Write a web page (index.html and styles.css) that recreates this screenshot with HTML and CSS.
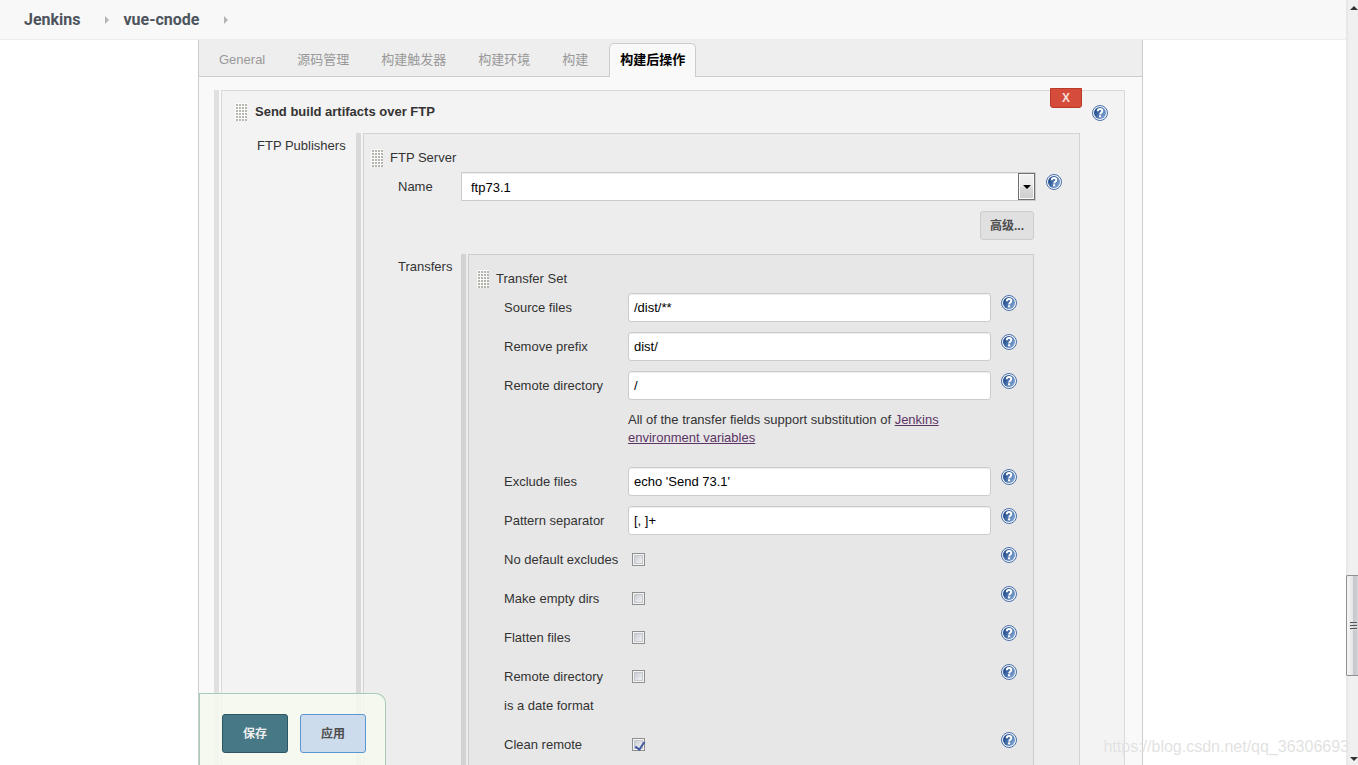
FILE: index.html
```html
<!DOCTYPE html>
<html lang="zh-CN">
<head>
<meta charset="utf-8">
<title>vue-cnode Config [Jenkins]</title>
<link rel="stylesheet" href="styles.css">
</head>
<body>
<svg class="defs" aria-hidden="true">
  <defs>
    <linearGradient id="ball" x1="0" y1="0.2" x2="1" y2="0.8">
      <stop offset="0.1" stop-color="#1f4a8a"/>
      <stop offset="1" stop-color="#86abd9"/>
    </linearGradient>
    <symbol id="help" viewBox="0 0 16 16">
      <circle cx="8" cy="8" r="7.5" fill="#f4f7fb" stroke="#4a70ab" stroke-width="1"/>
      <circle cx="8" cy="8" r="6" fill="url(#ball)"/>
      <path d="M5.700 6.200C5.800 4.600 6.800 4 8.100 4c1.400 0 2.200.8 2.200 1.900C10.300 7.400 8.200 7.500 8.200 9.400" fill="none" stroke="#fff" stroke-width="1.900"/>
      <rect x="7" y="10.300" width="2.200" height="2" fill="#fff"/>
    </symbol>
  </defs>
</svg>

<div class="app">
  <nav class="breadcrumbs">
    <a class="crumb" href="#">Jenkins</a>
    <span class="crumb-arrow"></span>
    <a class="crumb" href="#">vue-cnode</a>
    <span class="crumb-arrow"></span>
  </nav>

  <main class="page">
    <form class="config">
      <div class="tabs">
        <a class="tab" href="#">General</a>
        <a class="tab" href="#">源码管理</a>
        <a class="tab" href="#">构建触发器</a>
        <a class="tab" href="#">构建环境</a>
        <a class="tab" href="#">构建</a>
        <a class="tab active" href="#">构建后操作</a>
      </div>

      <div class="sections">
        <section class="chunk level-1">
          <button class="delete" type="button">X</button>
          <div class="chunk-head">
            <span class="grip"></span>
            <b class="title">Send build artifacts over FTP</b>
            <a class="help" href="#" aria-label="Help"><svg><use href="#help"/></svg></a>
          </div>

          <div class="row publishers">
            <span class="label">FTP Publishers</span>
            <section class="chunk level-2">
              <div class="chunk-head">
                <span class="grip"></span>
                <span class="title">FTP Server</span>
              </div>
              <div class="row server">
                <label class="label" for="name">Name</label>
                <div class="select-box">
                  <select id="name"><option>ftp73.1</option></select>
                  <span class="select-arrow"></span>
                </div>
                <a class="help" href="#" aria-label="Help"><svg><use href="#help"/></svg></a>
              </div>
              <div class="actions">
                <button class="advanced" type="button">高级...</button>
              </div>
              <div class="row server">
                <span class="label">Transfers</span>
                <section class="chunk level-3">
                  <div class="chunk-head">
                    <span class="grip"></span>
                    <span class="title">Transfer Set</span>
                  </div>
                  <div class="fields">
                    <div class="row field">
                      <label class="label" for="source">Source files</label>
                      <input class="text" id="source" type="text" value="/dist/**">
                      <a class="help" href="#" aria-label="Help"><svg><use href="#help"/></svg></a>
                    </div>
                    <div class="row field">
                      <label class="label" for="prefix">Remove prefix</label>
                      <input class="text" id="prefix" type="text" value="dist/">
                      <a class="help" href="#" aria-label="Help"><svg><use href="#help"/></svg></a>
                    </div>
                    <div class="row field">
                      <label class="label" for="remote">Remote directory</label>
                      <input class="text" id="remote" type="text" value="/">
                      <a class="help" href="#" aria-label="Help"><svg><use href="#help"/></svg></a>
                    </div>
                    <div class="row field">
                      <p class="note">All of the transfer fields support substitution of <a href="#">Jenkins environment variables</a></p>
                    </div>
                    <div class="row field">
                      <label class="label" for="exclude">Exclude files</label>
                      <input class="text" id="exclude" type="text" value="echo 'Send 73.1'">
                      <a class="help" href="#" aria-label="Help"><svg><use href="#help"/></svg></a>
                    </div>
                    <div class="row field">
                      <label class="label" for="pattern">Pattern separator</label>
                      <input class="text" id="pattern" type="text" value="[, ]+">
                      <a class="help" href="#" aria-label="Help"><svg><use href="#help"/></svg></a>
                    </div>
                    <div class="row field">
                      <label class="label" for="nodefault">No default excludes</label>
                      <input class="check" id="nodefault" type="checkbox">
                      <a class="help" href="#" aria-label="Help"><svg><use href="#help"/></svg></a>
                    </div>
                    <div class="row field">
                      <label class="label" for="empty">Make empty dirs</label>
                      <input class="check" id="empty" type="checkbox">
                      <a class="help" href="#" aria-label="Help"><svg><use href="#help"/></svg></a>
                    </div>
                    <div class="row field">
                      <label class="label" for="flatten">Flatten files</label>
                      <input class="check" id="flatten" type="checkbox">
                      <a class="help" href="#" aria-label="Help"><svg><use href="#help"/></svg></a>
                    </div>
                    <div class="row field">
                      <label class="label" for="date">Remote directory<br>is a date format</label>
                      <input class="check" id="date" type="checkbox">
                      <a class="help" href="#" aria-label="Help"><svg><use href="#help"/></svg></a>
                    </div>
                    <div class="row field">
                      <label class="label" for="clean">Clean remote</label>
                      <input class="check" id="clean" type="checkbox" checked>
                      <a class="help" href="#" aria-label="Help"><svg><use href="#help"/></svg></a>
                    </div>
                  </div>
                </section>
              </div>
            </section>
          </div>
        </section>
      </div>

      <div class="save-bar">
        <button class="save" type="submit">保存</button>
        <button class="apply" type="button">应用</button>
      </div>
    </form>
  </main>
</div>

<div class="scrollbar" aria-hidden="true">
  <span class="scroll-up"></span>
  <span class="scroll-thumb"><i></i><i></i><i></i></span>
  <span class="scroll-down"></span>
</div>
<span class="watermark">https://blog.csdn.net/qq_36306693</span>
</body>
</html>
```
FILE: styles.css
```css
* { box-sizing: border-box; }

body {
  margin: 0;
  height: 100vh;
  display: flex;
  overflow: hidden;
  background: #fff;
  color: #333;
  font: 13px/29px "Liberation Sans", "Noto Sans CJK SC", sans-serif;
}
button, input, select { font: inherit; margin: 0; }
.defs { position: absolute; width: 0; height: 0; }

.app {
  flex: 1;
  min-width: 0;
  display: flex;
  flex-direction: column;
}

/* Breadcrumbs */
.breadcrumbs {
  flex: none;
  height: 40px;
  padding-left: 24px;
  display: flex;
  align-items: center;
  background: #f8f8f8;
  border-bottom: 1px solid #ececec;
}
.crumb {
  color: #4d545d;
  font: bold 16px/20px Roboto, sans-serif;
  text-decoration: none;
}
.crumb-arrow {
  margin: 0 15px 0 24px;
  border: 4px solid transparent;
  border-left: 4px solid #b4b4b4;
  border-right: 0;
}

/* Page */
.page {
  flex: 1;
  min-height: 0;
  overflow: hidden;
  padding: 0 203px 0 198px;
}
.config {
  position: relative;
  height: 100%;
  display: flex;
  flex-direction: column;
  background: #f9f9f9;
  border: solid #ccc;
  border-width: 0 1px;
}
.tabs {
  flex: none;
  display: flex;
  gap: 10px;
  padding: 3px 9px 0;
  background: #eee;
  box-shadow: inset 0 -1px #ccc;
}
.tab {
  height: 34px;
  padding: 0 10px;
  border: 1px solid transparent;
  border-bottom: 0;
  border-radius: 5px 5px 0 0;
  color: #999;
  line-height: 32px;
  text-decoration: none;
}
.tab.active {
  background: #f9f9f9;
  border-color: #ccc;
  color: #000;
  font-weight: bold;
}
.sections {
  flex: 1;
  min-height: 0;
  padding: 13px 17px 0 15px;
  overflow: hidden;
}

/* Nested draggable chunks: a thick bar, then a bordered box */
.chunk {
  position: relative;
  margin-left: 7px;
  border: 1px solid #d9d9d9;
  background: #f3f3f3;
}
.chunk::before {
  content: "";
  position: absolute;
  top: -1px;
  bottom: -1px;
  left: -8px;
  width: 5px;
  background: #e0e0e0;
}
.chunk-head { display: flex; align-items: center; gap: 7px; }
.level-1 > .chunk-head { gap: 8px; padding: 6px 16px 5px 13px; }
.level-2 { margin-top: 2px; border-color: #d3d3d3; background: #ededed; }
.level-2::before { background: #d9d9d9; }
.level-2 > .chunk-head { padding: 9px 7px 0; }
.level-3 { margin: 2px 2px 0 7px; border-color: #cdcdcd; background: #e7e7e7; }
.level-3::before { background: #d3d3d3; }
.level-3 > .chunk-head { padding: 9px 8px 0; }

.grip {
  width: 12px;
  height: 18px;
  background-color: #fff;
  background-image: radial-gradient(circle at 2px 2px, #a3a39a 1px, transparent 1px);
  background-size: 3px 3px;
  opacity: 0.75;
}
.title { flex: 1; }

.row { display: grid; align-items: start; }
.publishers { grid-template-columns: 99px 1fr; padding: 0 44px 20px 35px; }
.server { grid-template-columns: 63px 1fr 26px; padding: 0 17px 0 34px; }
.fields {
  display: flex;
  flex-direction: column;
  gap: 10px;
  padding: 0 16px 30px 35px;
}
.field { grid-template-columns: 124px 1fr 26px; }

.help {
  width: 16px;
  height: 16px;
  margin-top: 2px;
}
.row .help { margin-left: 10px; }
.level-1 > .chunk-head .help { margin-top: 3px; }
.help svg { display: block; width: 16px; height: 16px; }

.text {
  width: 100%;
  height: 29px;
  padding: 0 5px;
  border: 1px solid #ccc;
  border-radius: 3px;
  background: #fff;
  box-shadow: inset 0 1px 1px rgba(0, 0, 0, 0.075);
  color: #000;
}
.select-box { position: relative; height: 29px; }
.select-box select {
  appearance: none;
  width: 100%;
  height: 29px;
  padding: 0 28px 0 9px;
  border: 1px solid #ccc;
  border-radius: 0;
  background: #fff;
  box-shadow: inset 0 1px 1px rgba(0, 0, 0, 0.075);
  color: #000;
}
.select-arrow {
  position: absolute;
  top: 1px;
  right: 1px;
  width: 17px;
  height: 27px;
  border: 1px solid #707070;
  box-shadow: inset 0 0 0 1px #fafafa;
  background: linear-gradient(#f2f2f2, #e9e9e9 50%, #dadada 50%, #cfcfcf);
  pointer-events: none;
}
.select-arrow::after {
  content: "";
  position: absolute;
  top: 11px;
  left: 4px;
  border: 4px solid transparent;
  border-top-color: #000;
  border-bottom: 0;
}
.note {
  grid-column: 2;
  margin: 1px 0 10px;
  line-height: 18px;
}
.note a { color: #5c3566; }

.check {
  appearance: none;
  position: relative;
  width: 13px;
  height: 13px;
  margin: 8px 0 0 4px;
  border: 1px solid #8e8f8f;
  background: linear-gradient(135deg, #c3c8cf, #f6f6f6) content-box, #f4f4f4;
  box-shadow: inset 0 0 0 1px #f4f4f4, inset 0 0 0 2px #c4c7cb;
  padding: 1px;
}
.check:checked::after {
  content: "";
  position: absolute;
  top: 1px;
  left: 4px;
  width: 4px;
  height: 8px;
  border: solid #4258a0;
  border-width: 0 2px 2px 0;
  transform: rotate(35deg);
}

/* Buttons */
.delete {
  position: absolute;
  top: -3px;
  right: 42px;
  width: 32px;
  height: 20px;
  padding: 0;
  border: 1px solid #b93a2b;
  border-radius: 0 0 3px 3px;
  background: #d54c3b;
  color: #f6dfdc;
  font-size: 12px;
  font-weight: bold;
  line-height: 18px;
}
.actions {
  display: flex;
  justify-content: flex-end;
  padding: 10px 45px 12px 0;
}
.advanced {
  height: 29px;
  padding: 0 9px;
  border: 1px solid #ccc;
  border-radius: 3px;
  background: #e0e0e0;
  color: #4d4d4d;
  font-size: 12px;
  font-weight: bold;
  line-height: 26px;
}
.save-bar {
  position: absolute;
  left: 0;
  bottom: 0;
  display: flex;
  gap: 12px;
  padding: 20px 19px 12px 22px;
  border: solid #a9cbb7;
  border-width: 1px 1px 0 1px;
  border-radius: 0 10px 0 0;
  background: rgba(245, 249, 239, 0.85);
}
.save, .apply {
  width: 66px;
  height: 39px;
  padding: 2px 0 0;
  border: 1px solid #2d5664;
  border-radius: 3px;
  background: #467886;
  color: #eee;
  font-size: 12px;
  font-weight: bold;
}
.apply {
  border-color: #5c97d1;
  background: #ccdcec;
  color: #4d4d4d;
}

/* Window scrollbar */
.scrollbar {
  flex: none;
  width: 12px;
  display: flex;
  flex-direction: column;
  align-items: flex-end;
  padding: 6px 0 4px;
  background: linear-gradient(90deg, #e6e6e6, #f0f0f0 30%);
}
.scroll-up, .scroll-down {
  border: 4px solid transparent;
  border-bottom-color: #333;
  border-top: 0;
}
.scroll-down {
  border-top: 4px solid #333;
  border-bottom: 0;
}
.scroll-thumb {
  width: 12px;
  height: 101px;
  margin: auto 0 81px;
  display: flex;
  flex-direction: column;
  align-items: flex-end;
  justify-content: center;
  gap: 1px;
  padding-right: 1px;
  border: 1px solid #8f8f8f;
  border-right: 0;
  border-radius: 2px 0 0 2px;
  background: linear-gradient(90deg, #f6f6f6, #e6e6e8 50%, #c6c7cc 60%, #d2d3d6);
}
.scroll-thumb i { width: 7px; height: 2px; background: #555; border-bottom: 1px solid #ddd; }

.watermark {
  position: absolute;
  right: 9px;
  bottom: 8px;
  color: rgba(205, 205, 205, 0.6);
  font-size: 16px;
  line-height: 20px;
  text-shadow: 0 0 1px #fff;
  pointer-events: none;
}
```
